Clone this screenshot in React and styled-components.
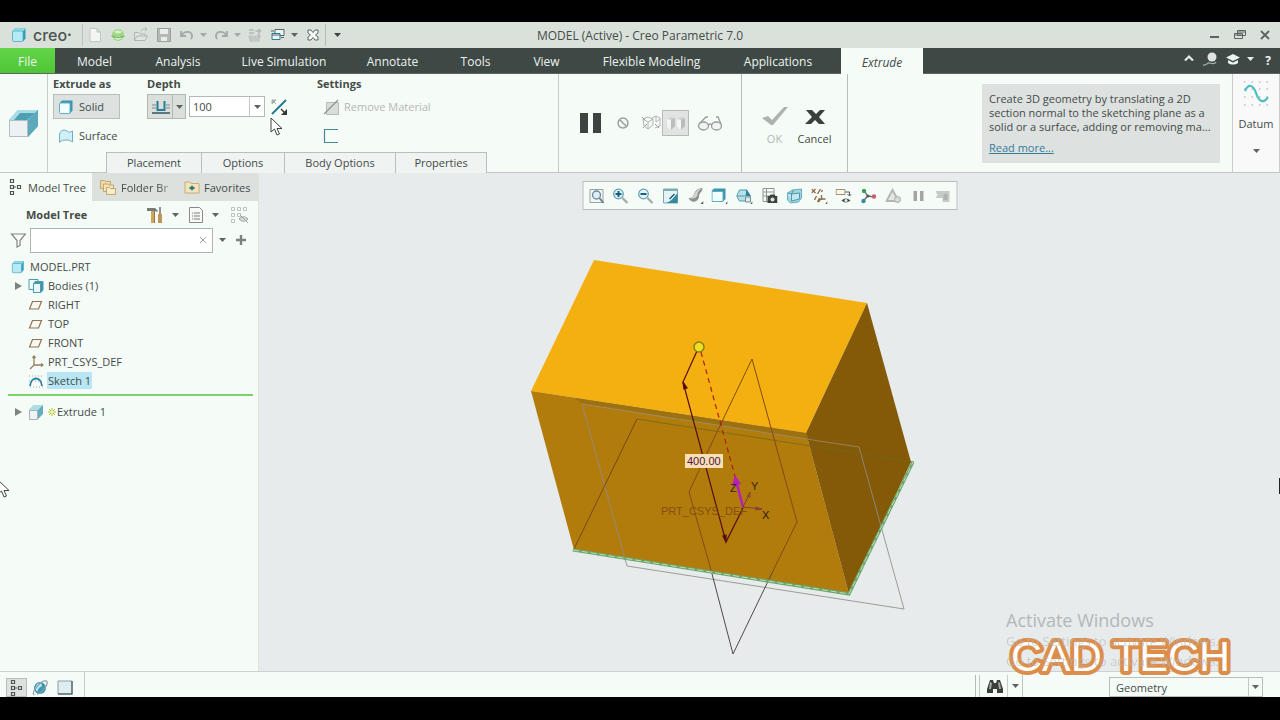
import React, { useState } from 'react';
import styled, { createGlobalStyle } from 'styled-components';

const GlobalStyle = createGlobalStyle`
  * { box-sizing: border-box; }
  body {
    margin: 0;
    background: #000;
    color: #444b49;
    font-family: "Open Sans", "Noto Sans", sans-serif;
    font-size: 11px;
  }
  button, input, select { font: inherit; color: inherit; }
  svg { display: block; flex: none; }
`;

/* ---------- icons ---------- */

const shapes = {
  cube: (
    <>
      <path d="M1.500 4.500 4 1.500h10.500v10l-2.500 3" fill="#2f9db8" />
      <path d="M1.500 4.500 4 1.500h10.500L12 4.500z" fill="#8edcec" />
      <rect x="1.500" y="4" width="10.500" height="10.500" rx="1" fill="#b4eaf4" stroke="#4fa9bf" strokeWidth=".8" />
    </>
  ),
  solid: (
    <>
      <path d="M1.500 4 4 1.500h10.500v10l-2.500 3z" fill="#3b97ae" />
      <rect x="1.500" y="4" width="10.500" height="10.500" rx="1" fill="#f3fdfe" stroke="#5fb0c4" />
    </>
  ),
  surface: <path d="M1.500 14.500V6C3 1.500 7 1.500 9 3s3.500 1.500 5.500 0v11c-2-1.500-3.500-2-6.500-2s-4.500.5-6.500 2.500z" fill="#d0eff6" stroke="#76aebd" />,
  page: <path d="M3 1.500h7l3.500 3.500v9.500H3zM10 1.500V5h3.500" fill="#f2f5f2" stroke="#c0c6c2" />,
  globe: (
    <>
      <circle cx="8" cy="8" r="6" fill="#9fd882" />
      <path d="M4 4.500c3-1.500 5-1.500 8 0l-2 2H6zM4 11.500c3 1.500 5 1.500 8 0l-2-2H6z" fill="#d9efcc" />
      <path d="M1.500 9q6.500 3 13 0" stroke="#7fb066" strokeWidth="1.200" fill="none" />
    </>
  ),
  open: (
    <path d="M1.500 13.500V5.500h4L7 7h5v2M1.500 13.500 4 9h10.500L12 13.500zM8 4c1-2 3-2.500 6-2m-2-1.500 2 1.500-2 2" fill="#e0e5e1" stroke="#b0b6b2" />
  ),
  save: (
    <>
      <path d="M1.500 1.500h13v13h-13z" fill="#b4b9b6" stroke="#9aa19d" />
      <path d="M4 2h8v5H4zM5 10h6v4H5z" fill="#e9eeea" />
    </>
  ),
  undo: <path d="M2 4v5h5M2.500 8.500C6 3 14 4 13 10l-1 2" fill="none" stroke="#a4aaa7" strokeWidth="1.800" />,
  redo: <path d="M14 4v5H9M13.500 8.500C10 3 2 4 3 10l1 2" fill="none" stroke="#a4aaa7" strokeWidth="1.800" />,
  regen: (
    <g fill="none" stroke="#b3b9b5">
      <path d="M2 3h5M2 6h5M8.500 4h5m-2-2 2 2-2 2M12 6v4" strokeWidth="1.500" />
      <path d="M2 9h4v2H2zM8 9h5v2H8zM3 12h9v2H3z" />
    </g>
  ),
  windows: (
    <g fill="#edf4f2" stroke="#56676a">
      <path d="M5 2.500h9v6H5z" />
      <path d="M2 6.500h8v6H2z" stroke="#2d7f97" />
      <path d="M11 10.500h3M1 4h3M2 8h8" />
    </g>
  ),
  closeX: <path d="M3 3h3l2 2.500L10 3h3v3l-2.500 2 2.500 2v3h-3l-2-2.500L6 13H3v-3l2.500-2L3 6z" fill="#f5f8f5" stroke="#5d6663" />,
  extrude: (
    <>
      <path d="M0 12 9 2h20v16l-10 11" fill="#62b0c3" />
      <path d="M9 2h20L19 12H0z" fill="#a8dce6" />
      <path d="M11 5h15l-8 7H5z" fill="#4d9fb4" />
      <path d="M19 12 29 2v16L19 29z" fill="#5da9bc" />
      <path d="M.5 12.500h18v16H.5z" fill="#eef1f3" stroke="#b4bec2" />
    </>
  ),
  depth: (
    <>
      <path d="M1 6h4M15 6h4M1 9h4M15 9h4" stroke="#7c8986" />
      <path d="M6.500 2v9h7V2" fill="none" stroke="#257f99" strokeWidth="2" />
      <path d="M1 14h18" stroke="#36535c" strokeWidth="1.500" />
    </>
  ),
  flip: (
    <>
      <path d="M1 15 15 1" stroke="#257a92" strokeWidth="2" />
      <path d="M1 1h4L1 5zM3 3l2 2" fill="#a7adaa" stroke="#a7adaa" />
      <path d="M16 10v6h-6z" fill="#333b39" />
      <path d="M10 10l4 4" stroke="#333b39" strokeWidth="1.500" />
    </>
  ),
  removeMat: (
    <>
      <path d="M3.500 3.500h12v12h-12z" fill="#d9dddb" stroke="#b5bab7" />
      <path d="M1 15 15 1" stroke="#8f9592" strokeWidth="1.200" />
    </>
  ),
  openSketch: <path d="M15 1.500H1.500v13H15" fill="none" stroke="#4a8793" strokeWidth="1.200" />,
  pause: <path d="M1 1h8v20H1zM14 1h8v20h-8z" fill="#3c4341" />,
  noEntry: <path d="M8 3a5 5 0 1 0 .01 0zM4.500 4.500l7 7" fill="none" stroke="#9ba09e" strokeWidth="1.500" />,
  wireBoxes: (
    <g fill="none" stroke="#b0b5b3">
      <path d="M1 4l5-2 5 2v6l-5 4-4-3zM1 4l5 3 5-3M6 7v7M10 3l4-2 4 2v8l-5 2M14 1v6l4-3" />
      <path d="M0 2l3 3M17 13l-4-4M1 13l4-4" stroke="#999f9c" />
    </g>
  ),
  solidBoxes: (
    <>
      <path d="M1 4l4-2 4 1v8l-4 4-4-3zM11 4l4-2 4 1v8l-4 4-4-3z" fill="#cfd3d2" />
      <path d="M1 4l4 1v10l-4-3zM11 4l4 1v10l-4-3z" fill="#f4f6f5" />
      <path d="M5 5l4-2v8l-4 4zM15 5l4-2v8l-4 4z" fill="#b9bebd" />
    </>
  ),
  glasses: (
    <g fill="#f0f3f1" stroke="#979d9a" strokeWidth="1.300">
      <ellipse cx="6.500" cy="13" rx="5" ry="4" />
      <ellipse cx="19.500" cy="13" rx="5" ry="4" />
      <path d="M11 12q2-2 4 0M2 11 9 4h2M24 11 21 4h-2" fill="none" />
    </g>
  ),
  check: <path d="M0 12l6-2 4 4L22 1h4L11 19H9z" fill="#aeb2b0" />,
  cross: <path d="M1 1h6l4 4 4-4h5l-6 7 6 7h-6l-4-4-4 4H0l7-7z" fill="#39403e" />,
  datum: (
    <>
      <path d="M1 1h24M1 8h24M1 16h24M1 24h24" stroke="#9ca3a0" strokeDasharray="1.500 6" />
      <path d="M2 10c3-7 8-7 11 2s8 11 12 4" fill="none" stroke="#4cbfc4" strokeWidth="2.200" />
    </>
  ),
  chevUp: <path d="M3 9l5-5 5 5-2 1-3-3-3 3z" fill="#e8edeb" />,
  person: (
    <>
      <circle cx="9" cy="6" r="4.500" fill="#dfe4e2" />
      <path d="M0 14c4 1 4-3 7-2s5 1 6-1" stroke="#aab1ae" fill="none" strokeWidth="1.300" />
    </>
  ),
  gradCap: <path d="M8 3l7 3.500L8 10 1 6.500zM3 9l5 2.500L13 9v3c-3 2-7 2-10 0z" fill="#eef2f0" />,
  minimize: <path d="M3 9h9v2H3z" fill="#5b6461" />,
  restore: <path d="M5.500 3.500h8v5h-8zM5.500 5h8M2.500 6.500h8v5h-8zM2.500 8h8" fill="#dce3de" stroke="#5b6461" />,
  winClose: <path d="M4 4l8 8m0-8-8 8" stroke="#5b6461" strokeWidth="1.800" />,
  treeMark: <path d="M2.500.5h3v3h-3zM2.500 6.500h3v3h-3zM2.500 12.500h3v3h-3zM9.500 6.500h3v3h-3zM6 8h2" fill="none" stroke="#4f5755" strokeWidth="1.200" />,
  folders: (
    <g fill="#ecd9a6" stroke="#bb9a5a" strokeWidth=".8">
      <path d="M.5 1.500h4l1 1h5v7h-10z" />
      <path d="M3.500 5h4l1 1h5v6.500h-10z" fill="#f2e3b9" />
      <path d="M6.500 8.500h3l1 1h5v6h-9z" fill="#f7ecca" />
    </g>
  ),
  favorite: (
    <>
      <path d="M1 3h5l1 1.500h8V14H1z" fill="#f3e5ba" stroke="#bda067" strokeWidth=".8" />
      <path d="M8 6.500l1 1.500 2 1-2 1-1 1.500L7 10 5 9l2-1z" fill="#23707f" stroke="#23707f" strokeWidth=".5" />
    </>
  ),
  tools: (
    <>
      <path d="M0 1h8l3 3-1 1-2-1H0z" fill="#777b78" />
      <path d="M4 4h4v12H4z" fill="#cda565" />
      <path d="M7 4h1v12H7z" fill="#9a7439" />
      <path d="M12 0h2v8h-2z" fill="#90928f" />
      <path d="M11 7h4v9h-4z" fill="#c1955a" />
    </>
  ),
  list: (
    <>
      <path d="M1.500.5h10l3 3v12h-13z" fill="#f8faf8" stroke="#868d8a" />
      <path d="M4 6h1m1 0h6M4 9h1m1 0h6M4 12h1m1 0h6" stroke="#757c79" />
    </>
  ),
  treeHidden: (
    <>
      <path d="M1.500 1.500h3v3h-3zM1.500 7.500h3v3h-3zM1.500 13.500h3v3h-3zM7.500 1.500h3v3h-3zM7.500 7.500h3v3h-3zM13.500 1.500h3v3h-3z" fill="none" stroke="#bcc2bf" />
      <path d="M9 13c3-3 6-3 9 0-3 3-6 3-9 0zM10 9l8 8" fill="#d8dcda" stroke="#9da3a0" />
    </>
  ),
  funnel: <path d="M1.500 2h14l-5.500 6.500v5l-3 1.500V8.500z" fill="#fafcfa" stroke="#7f8683" strokeWidth="1.200" />,
  clear: <path d="M3 3l10 10m0-10-10 10" stroke="#9a9f9d" strokeWidth="1.500" />,
  plus: <path d="M8 3v10M3 8h10" stroke="#7b827f" strokeWidth="2.400" />,
  bodies: (
    <g stroke="#4d9db1">
      <path d="M1 1.500h9v10H1z" fill="#eefafb" />
      <path d="M5.500 6l1.500-2.500h8V12l-2 2.500H5.500z" fill="#3d91a8" />
      <path d="M5.500 5.500h7v9h-7z" fill="#e6f8fa" />
    </g>
  ),
  plane: <path d="M4.500 4.500h9l-3 7.500h-9z" fill="#fbf8ef" stroke="#8d7657" strokeWidth="1.200" />,
  csys: (
    <g fill="none" stroke="#957f5c" strokeWidth="1.300">
      <path d="M6 2v9h9M6 11l-4 4M4.500 4 6 2l1.500 2M13 9.500l2 1.500-2 1.500" />
    </g>
  ),
  sketch: (
    <>
      <path d="M2 13c1-10 11-10 12 0" fill="none" stroke="#2f86a4" strokeWidth="1.800" />
      <path d="M1 3h14M1 8h14M2 14h13" stroke="#98a7a8" strokeDasharray="1 2" />
    </>
  ),
  miniExtrude: (
    <>
      <path d="M1 6l5-5h9v9l-5 5z" fill="#64aec0" />
      <path d="M1 6l5-5h9l-5 5z" fill="#afdde6" />
      <path d="M1.500 6.500h8v9h-8z" fill="#f0f3f4" stroke="#a6b3b7" />
    </>
  ),
  spark: (
    <>
      <path d="M1 1l6 6M7 1 1 7M4 0v8M0 4h8" stroke="#a9c42a" />
      <circle cx="4" cy="4" r="1.500" fill="#f6f9a0" />
    </>
  ),
  refit: (
    <>
      <path d="M1.500 1.500h13v13h-13z" fill="#f3f7f6" stroke="#9aa29f" />
      <circle cx="8" cy="7" r="4" fill="#d9eef5" stroke="#6d8594" strokeWidth="1.300" />
      <path d="M11 10l4 5" stroke="#6d8594" strokeWidth="2" />
    </>
  ),
  zoomIn: (
    <>
      <circle cx="6" cy="6" r="4.800" fill="#e4f5fa" stroke="#5f9eb2" strokeWidth="1.200" />
      <path d="M6 3v6M3 6h6" stroke="#175f7c" strokeWidth="2" />
      <path d="M10 10l5 5" stroke="#a3a9a6" strokeWidth="2.200" />
    </>
  ),
  zoomOut: (
    <>
      <circle cx="6" cy="6" r="4.800" fill="#e4f5fa" stroke="#5f9eb2" strokeWidth="1.200" />
      <path d="M3 6h6" stroke="#175f7c" strokeWidth="2" />
      <path d="M10 10l5 5" stroke="#a3a9a6" strokeWidth="2.200" />
    </>
  ),
  repaint: (
    <>
      <path d="M1 1h14v14H1z" fill="#e3f4f6" stroke="#86a4aa" />
      <path d="M1 1h14v2H1z" fill="#7fadb6" />
      <path d="M15 5v10H3c5-1 8-5 12-10z" fill="#338ba0" />
      <path d="M7 11l5-5" stroke="#1d5463" strokeWidth="1.300" />
    </>
  ),
  spin: (
    <>
      <path d="M1 10c2 4 6 5 9 2 2-2 1-4 2-6s3-3 3-6c-3 0-7 2-8 5s-2 5-6 5z" fill="#8b8f8d" />
      <path d="M1 10c4 1 5-2 6-4s3-5 8-6c-3 2-5 4-5 6s-2 6-9 4z" fill="#d4d7d5" />
      <path d="M13 16h3v-3z" fill="#4a504e" />
    </>
  ),
  display: (
    <>
      <path d="M0 3l2.500-2.500H14V11l-2.500 2.500z" fill="#3d95ab" />
      <path d="M.5 3.500h11v10H.5z" fill="#f4fdfe" stroke="#5badc0" />
      <path d="M14 16h2v-3z" fill="#4a504e" />
    </>
  ),
  saved: (
    <>
      <path d="M0 8l3-6h7l4 6-3 5H3z" fill="#b3e4ed" stroke="#4f98aa" />
      <path d="M10 1l4 7H9z" fill="#2c8399" />
      <path d="M0 8h9M9 9h5v5H9z" fill="#e2e8e8" stroke="#6f8e96" />
      <path d="M14 16h2v-3z" fill="#4a504e" />
    </>
  ),
  viewMgr: (
    <>
      <path d="M1.500.5h11v13h-11zM1.500 4h11M1.500 8h7M5 .5v13" fill="#fafbfa" stroke="#8f9592" />
      <path d="M6 8h2l1-1.500h4L14 8h2v7H6z" fill="#3c4240" />
      <circle cx="11" cy="11.500" r="2" fill="#dfe3e1" />
    </>
  ),
  persp: (
    <>
      <path d="M1 5l5-3 9-1v9l-3 4-8 1-3-3z" fill="#9ed5df" stroke="#6aaebd" />
      <path d="M5 6l8-1v6l-8 2zM1 5l4 1v7M5 6l2-4" fill="#c4e8ee" stroke="#4b97ab" />
    </>
  ),
  datums: (
    <>
      <path d="M0 1l4 4M4 1 0 5M3 12l2-4M6 6l3-5M6 14l2-4M10 4l1-2M9 11h5M10 12V7M9 11l-2 3" stroke="#8c6e4b" strokeWidth="1.400" />
      <path d="M14 16h2v-3z" fill="#4a504e" />
    </>
  ),
  annot: (
    <>
      <path d="M.5 1.500h9v5h-9z" fill="#fbf8ee" stroke="#a0906c" />
      <path d="M10 4h4v4m-2-2 2 2 2-2" fill="none" stroke="#555c5a" />
      <path d="M6 12.500q4-4 9 0-5 4-9 0z" fill="#444b49" />
      <circle cx="10.500" cy="12.500" r="1.500" fill="#e8eceb" />
    </>
  ),
  spinCenter: (
    <>
      <path d="M7 8 4 3M7 8l7 1M7 8l-4 5" stroke="#6a716e" strokeWidth="1.400" />
      <circle cx="3.500" cy="3" r="2.200" fill="#3e9c5c" />
      <circle cx="13.500" cy="8.500" r="2.200" fill="#cf5a6a" />
      <circle cx="3" cy="13" r="2.200" fill="#3b86a0" />
      <circle cx="7.500" cy="8" r="1.500" fill="#515856" />
    </>
  ),
  simulate: (
    <>
      <path d="M7 2l6 11H1z" fill="#e4e7e5" stroke="#b3b8b5" strokeWidth="2" />
      <circle cx="12" cy="11.500" r="3" fill="#d6dad8" stroke="#a5aba8" />
    </>
  ),
  smallPause: <path d="M3 3h3.500v10H3zM9.500 3H13v10H9.500z" fill="#a1a6a3" />,
  resume: (
    <>
      <path d="M1 3h14v11H8v-4H1l2-3z" fill="#c6cac8" />
      <path d="M9 6h4v6H9z" fill="#aeb3b0" />
    </>
  ),
  browser: (
    <>
      <circle cx="8" cy="8" r="6" fill="#3f97b4" />
      <path d="M5 4l4-1 1 3-3 2-2 4-2-4z" fill="#bfe4ec" />
      <path d="M2 15C-1 11 10 0 14 1s-3 12-9 13" fill="none" stroke="#8fa3a9" strokeWidth="1.300" />
    </>
  ),
  sheet: (
    <>
      <path d="M1 1h14v13H1z" fill="#deedf0" stroke="#8fa0a3" />
      <path d="M15 1v13H1" fill="none" stroke="#5c7278" strokeWidth="1.500" />
    </>
  ),
  binoculars: (
    <>
      <path d="M3 2h3l1 3h2l1-3h3l3 9v4h-6v-4H6v4H0v-4z" fill="#3a3f3d" />
      <path d="M3 4l2 1-1 6H2zM11 4l2 1 1 6h-2z" fill="#a7acaa" />
    </>
  ),
};

const Icon = ({ name, w = 16, h = 16, box }) => (
  <svg width={w} height={h} viewBox={box || `0 0 ${w} ${h}`} aria-hidden="true">
    {shapes[name]}
  </svg>
);

const Caret = ({ color = '#5d6462' }) => (
  <svg width="7" height="4" viewBox="0 0 7 4" aria-hidden="true">
    <path d="M0 0h7L3.500 4z" fill={color} />
  </svg>
);

/* ---------- app ---------- */

const menuTabs = [
  ['Model', 79],
  ['Analysis', 88],
  ['Live Simulation', 124],
  ['Annotate', 93],
  ['Tools', 73],
  ['View', 69],
  ['Flexible Modeling', 141],
  ['Applications', 112],
];

const viewTools = [
  ['refit', 'Refit'],
  ['zoomIn', 'Zoom In'],
  ['zoomOut', 'Zoom Out'],
  ['repaint', 'Repaint'],
  ['spin', 'Rendering'],
  ['display', 'Display Style'],
  ['saved', 'Saved Orientations'],
  ['viewMgr', 'View Manager'],
  ['persp', 'Perspective'],
  ['datums', 'Datum Display'],
  ['annot', 'Annotation Display'],
  ['spinCenter', 'Spin Center'],
  ['simulate', 'Simulate'],
  ['smallPause', 'Pause'],
  ['resume', 'Resume'],
];

const treeItems = [
  { icon: 'bodies', label: 'Bodies (1)', arrow: true },
  { icon: 'plane', label: 'RIGHT' },
  { icon: 'plane', label: 'TOP' },
  { icon: 'plane', label: 'FRONT' },
  { icon: 'csys', label: 'PRT_CSYS_DEF' },
  { icon: 'sketch', label: 'Sketch 1' },
];

const TitleBar = () => (
  <TitleRow>
    <QuickBar>
      <Brand>
        <Icon name="cube" />
        <BrandName>creo<sup>•</sup></BrandName>
      </Brand>
      <Tool $w={23} aria-label="New"><Icon name="page" /></Tool>
      <Tool $w={23} aria-label="Select working directory"><Icon name="globe" /></Tool>
      <Tool $w={23} aria-label="Open"><Icon name="open" /></Tool>
      <Tool $w={23} aria-label="Save"><Icon name="save" /></Tool>
      <Tool $w={23} aria-label="Undo"><Icon name="undo" /></Tool>
      <Tool $w={11} aria-label="Undo list"><Caret color="#a4aaa7" /></Tool>
      <Tool $w={23} aria-label="Redo"><Icon name="redo" /></Tool>
      <Tool $w={11} aria-label="Redo list"><Caret color="#a4aaa7" /></Tool>
      <Tool $w={23} aria-label="Regenerate"><Icon name="regen" /></Tool>
      <Tool $w={23} aria-label="Windows"><Icon name="windows" /></Tool>
      <Tool $w={11} aria-label="Window list"><Caret /></Tool>
      <Tool $w={25} aria-label="Close window"><Icon name="closeX" /></Tool>
      <QuickMore aria-label="Customize"><Caret color="#3d4442" /></QuickMore>
    </QuickBar>
    <WindowTitle>MODEL (Active) - Creo Parametric 7.0</WindowTitle>
    <WindowButtons>
      <Tool $w={25} aria-label="Minimize"><Icon name="minimize" /></Tool>
      <Tool $w={25} aria-label="Restore"><Icon name="restore" /></Tool>
      <Tool $w={25} aria-label="Close"><Icon name="winClose" /></Tool>
    </WindowButtons>
  </TitleRow>
);

const MenuBar = () => (
  <MenuRow>
    <FileTab>File</FileTab>
    {menuTabs.map(([label, w]) => (
      <MenuTab key={label} $w={w}>{label}</MenuTab>
    ))}
    <ActiveTab>Extrude</ActiveTab>
    <MenuTools>
      <Tool $w={22} aria-label="Minimize ribbon"><Icon name="chevUp" /></Tool>
      <Tool $w={22} aria-label="Account"><Icon name="person" /></Tool>
      <Tool $w={22} aria-label="Learning"><Icon name="gradCap" /></Tool>
      <Tool $w={12} aria-label="Learning list"><Caret color="#e8edeb" /></Tool>
      <HelpButton aria-label="Help">?</HelpButton>
    </MenuTools>
  </MenuRow>
);

const Ribbon = () => {
  const [depth, setDepth] = useState('100');

  return (
    <RibbonRow>
      <FeatureCell><Icon name="extrude" w={30} h={30} /></FeatureCell>

      <OptionsCell>
        <Groups>
          <Group $w={94}>
            <GroupLabel>Extrude as</GroupLabel>
            <KindButton $on><Icon name="solid" />Solid</KindButton>
            <KindButton><Icon name="surface" />Surface</KindButton>
          </Group>
          <Group $w={170}>
            <GroupLabel as="label" htmlFor="depth">Depth</GroupLabel>
            <DepthRow>
              <SplitButton aria-label="Depth type">
                <Icon name="depth" w={20} h={16} />
                <SplitCaret><Caret /></SplitCaret>
              </SplitButton>
              <DepthBox>
                <input id="depth" value={depth} onChange={(e) => setDepth(e.target.value)} />
                <DepthDrop aria-label="Recent depths"><Caret /></DepthDrop>
              </DepthBox>
              <Tool $w={28} aria-label="Flip direction"><Icon name="flip" /></Tool>
            </DepthRow>
          </Group>
          <Group $w={130}>
            <GroupLabel>Settings</GroupLabel>
            <SettingButton disabled><Icon name="removeMat" w={17} h={16} />Remove Material</SettingButton>
            <SettingButton aria-label="Thicken sketch"><Icon name="openSketch" w={17} h={16} /></SettingButton>
          </Group>
        </Groups>
        <PanelTabs>
          <PanelTab $w={95}>Placement</PanelTab>
          <PanelTab $w={83}>Options</PanelTab>
          <PanelTab $w={111}>Body Options</PanelTab>
          <PanelTab $w={92}>Properties</PanelTab>
        </PanelTabs>
      </OptionsCell>

      <PreviewCell>
        <Tool $w={30} aria-label="Pause"><Icon name="pause" w={23} h={22} /></Tool>
        <Tool $w={36} aria-label="No preview"><Icon name="noEntry" /></Tool>
        <Tool $w={21} aria-label="Unattached"><Icon name="wireBoxes" w={19} h={16} /></Tool>
        <PressedTool aria-label="Attached"><Icon name="solidBoxes" w={20} h={17} /></PressedTool>
        <Tool $w={42} aria-label="Verify"><Icon name="glasses" w={26} h={20} /></Tool>
      </PreviewCell>

      <ConfirmCell>
        <ConfirmButton disabled><Icon name="check" w={26} h={20} />OK</ConfirmButton>
        <ConfirmButton><Icon name="cross" w={20} h={20} box="0 -3 20 20" />Cancel</ConfirmButton>
      </ConfirmCell>

      <HelpCell>
        <HelpCard>
          <p>Create 3D geometry by translating a 2D<br />section normal to the sketching plane as a<br />solid or a surface, adding or removing ma...</p>
          <a href="#help">Read more...</a>
        </HelpCard>
      </HelpCell>

      <DatumButton>
        <Icon name="datum" w={26} h={26} />
        <span>Datum</span>
        <Caret />
      </DatumButton>
    </RibbonRow>
  );
};

const Sidebar = () => (
  <Side>
    <SideTabs>
      <SideTab $w={92} $on><Icon name="treeMark" />Model Tree</SideTab>
      <SideTab $w={84}><Icon name="folders" w={17} h={16} /><Fade>Folder Br</Fade></SideTab>
      <SideTab $w={80}><Icon name="favorite" />Favorites</SideTab>
    </SideTabs>
    <SideHead>
      <strong>Model Tree</strong>
      <Tool $w={24} aria-label="Settings"><Icon name="tools" /></Tool>
      <Tool $w={17} aria-label="Settings list"><Caret /></Tool>
      <Tool $w={24} aria-label="Show"><Icon name="list" /></Tool>
      <Tool $w={14} aria-label="Show list"><Caret /></Tool>
      <Tool $w={34} aria-label="Hide tree"><Icon name="treeHidden" w={18} h={18} /></Tool>
    </SideHead>
    <SearchRow>
      <Icon name="funnel" />
      <SearchBox>
        <input aria-label="Filter tree" />
        <Tool $w={18} aria-label="Clear"><Icon name="clear" w={10} h={10} box="0 0 16 16" /></Tool>
      </SearchBox>
      <Tool $w={18} aria-label="Search options"><Caret /></Tool>
      <Tool $w={20} aria-label="Add"><Icon name="plus" /></Tool>
    </SearchRow>
    <Tree>
      <RootItem><Icon name="cube" w={14} h={14} box="0 0 16 16" />MODEL.PRT</RootItem>
      {treeItems.map((item) => (
        <TreeItem key={item.label}>
          <Arrow>{item.arrow && <ArrowIcon />}</Arrow>
          <Icon name={item.icon} />
          <ItemLabel $on={item.label === 'Sketch 1'}>{item.label}</ItemLabel>
        </TreeItem>
      ))}
      <InsertLine />
      <TreeItem>
        <Arrow><ArrowIcon /></Arrow>
        <Icon name="miniExtrude" />
        <NewMark><Icon name="spark" w={8} h={8} /></NewMark>
        Extrude 1
      </TreeItem>
    </Tree>
  </Side>
);

const ArrowIcon = () => (
  <svg width="7" height="8" viewBox="0 0 7 8"><path d="M0 0l7 4-7 4z" fill="#7d8481" /></svg>
);

const Model = () => (
  <Scene viewBox="259 173 1021 498" role="img" aria-label="Extruded block preview">
    <polygon points="594,260 867,303 806,433 531,391" fill="#f4b010" />
    <polygon points="531,391 806,433 849,594 574,550" fill="#b17c0b" />
    <polygon points="867,303 911,462 849,594 806,433" fill="#845a08" />
    <polygon points="575,398 806,433 809,440 582,404" fill="#9e7110" />
    <g fill="none" strokeWidth="1">
      <path d="M806 439 859 447" stroke="#93815d" />
      <path d="M582 404 806 439" stroke="#a08e62" />
      <path d="M859 447 904 609 627 566 582 404" stroke="#8f8e88" strokeOpacity=".85" />
      <path d="M573 551 637 419" stroke="#7a4718" />
      <path d="M637 419 914 462" stroke="#6f6a1c" strokeOpacity=".8" />
      <path d="M716 434 752 359 797 522 772 573M716 434 689 492 711 570" stroke="#87491a" />
      <path d="M711 570 733 654 772 573" stroke="#4d4a4b" />
      <path d="M573 550 849 594 913 462" stroke="#6da46c" strokeWidth="3" />
      <path d="M573 550 849 594 913 462" stroke="#b8e0b5" strokeDasharray="6 3" />
    </g>
    <g fill="none" stroke="#560c12" strokeWidth="1.200">
      <path d="M697 351 683 382 726 542 743 508" />
      <path d="M683 382l4 6-3 1zM726 542l0-7-3 1z" fill="#560c12" />
      <path d="M701 352 736 480" stroke="#b01d16" strokeDasharray="5 4" />
    </g>
    <circle cx="699" cy="347" r="5" fill="#f1de20" stroke="#85801a" strokeWidth="1.500" />
    <path d="M743 507 737 484" stroke="#b51fc0" strokeWidth="2.500" />
    <path d="M732 486 735 475 741 484z" fill="#b51fc0" />
    <path d="M743 507 749 495M743 507 761 509M747 497l3-5v6M755 507l7 2-7 1" stroke="#8a3d31" fill="none" />
    <SceneText x="661" y="515" fill="#85500f">PRT_CSYS_DEF</SceneText>
    <rect x="685" y="454" width="38" height="14" fill="#f8dfb5" />
    <SceneText x="687" y="465" fill="#4f1642">400.00</SceneText>
    <SceneText x="730" y="492" fill="#3b210c">Z</SceneText>
    <SceneText x="751" y="490" fill="#3b210c">Y</SceneText>
    <SceneText x="762" y="519" fill="#2a1a10">X</SceneText>
  </Scene>
);

const StatusBar = () => (
  <StatusRow>
    <StatusTools>
      <PressedSmall aria-label="Model tree"><Icon name="treeMark" /></PressedSmall>
      <Tool $w={26} aria-label="Browser"><Icon name="browser" /></Tool>
      <Tool $w={24} aria-label="Full screen"><Icon name="sheet" /></Tool>
    </StatusTools>
    <StatusFind>
      <FindGroup>
        <Tool $w={24} aria-label="Find"><Icon name="binoculars" /></Tool>
        <FindCaret aria-label="Find list"><Caret /></FindCaret>
      </FindGroup>
    </StatusFind>
    <FilterBox>
      <select aria-label="Selection filter" defaultValue="Geometry">
        <option>Geometry</option>
      </select>
      <FilterCaret><Caret /></FilterCaret>
    </FilterBox>
  </StatusRow>
);

const Pointer = () => (
  <svg width="13" height="19" viewBox="0 0 13 19">
    <path d="M1 1v14l3.500-3 2.500 6 2.500-1-2.500-5.500H12z" fill="#fff" stroke="#3f4442" />
  </svg>
);

const App = () => (
  <Screen>
    <GlobalStyle />
    <TitleBar />
    <MenuBar />
    <Ribbon />
    <Body>
      <Sidebar />
      <Viewport>
        <Model />
        <ViewToolbar>
          {viewTools.map(([icon, label]) => (
            <Tool key={icon} $w={24} aria-label={label}><Icon name={icon} /></Tool>
          ))}
        </ViewToolbar>
        <Watermark>
          <h2>Activate Windows</h2>
          <p>Go to Settings to activate Windows.</p>
          <p>Go to Settings to activate Windows.</p>
        </Watermark>
        <Channel width="232" height="48" viewBox="0 0 232 48">
          <text x="7" y="40">CAD TECH</text>
        </Channel>
      </Viewport>
    </Body>
    <StatusBar />
    <Cursor $x={270} $y={117}><Pointer /></Cursor>
    <Cursor $x={-3} $y={479}><Pointer /></Cursor>
    <EdgeCursor />
  </Screen>
);

/* ---------- styles ---------- */

const Screen = styled.div`
  position: relative;
  display: flex;
  flex-direction: column;
  min-height: 100vh;
  padding: 22px 0 23px;
  background: #000;
  overflow: hidden;
`;

const Tool = styled.button`
  display: flex;
  align-items: center;
  justify-content: center;
  flex: none;
  width: ${(p) => p.$w}px;
  height: 100%;
  padding: 0;
  border: 0;
  background: none;
`;

const TitleRow = styled.header`
  display: grid;
  grid-template-columns: 1fr auto 1fr;
  align-items: center;
  height: 26px;
  background: #dae1db;
`;

const QuickBar = styled.div`
  display: flex;
  align-items: center;
  height: 26px;
`;

const Brand = styled.div`
  display: flex;
  align-items: center;
  gap: 6px;
  width: 83px;
  height: 22px;
  padding-left: 11px;
  border-right: 1px solid #bcc3be;
`;

const BrandName = styled.span`
  color: #4c5452;
  font-family: Inter, sans-serif;
  font-size: 16px;
  font-weight: 500;
  line-height: 20px;

  sup {
    font-size: 8px;
    line-height: 0;
    vertical-align: 4px;
  }
`;

const QuickMore = styled(Tool)`
  width: 23px;
  height: 22px;
  border-left: 1px solid #b4bbb6;
`;

const WindowTitle = styled.div`
  font-size: 12px;
`;

const WindowButtons = styled.div`
  display: flex;
  justify-content: flex-end;
  height: 26px;
  padding-right: 3px;
`;

const MenuRow = styled.nav`
  display: flex;
  height: 26px;
  background: #3e4845;
  border-bottom: 1px solid #5d6663;
`;

const MenuTab = styled.button`
  flex: none;
  width: ${(p) => p.$w}px;
  padding: 2px 0 0;
  border: 0;
  background: none;
  color: #eef2f0;
  font-size: 12px;
  white-space: nowrap;
`;

const FileTab = styled(MenuTab)`
  width: 55px;
  background: linear-gradient(#62d548, #4fc637);
`;

const ActiveTab = styled(MenuTab)`
  width: 82px;
  height: 26px;
  margin-left: 7px;
  background: #f5fbf6;
  color: #444b49;
  font-style: italic;
`;

const MenuTools = styled.div`
  display: flex;
  height: 22px;
  margin-left: auto;
`;

const HelpButton = styled(MenuTab)`
  width: 24px;
  font-weight: 700;
`;

const RibbonRow = styled.section`
  display: flex;
  height: 99px;
  background: #f5fbf6;
  border-bottom: 1px solid #c4c9c7;
`;

const FeatureCell = styled.div`
  display: flex;
  align-items: center;
  padding-left: 9px;
  width: 48px;
  border-right: 1px solid #c8cdca;
`;

const OptionsCell = styled.div`
  display: flex;
  flex-direction: column;
  justify-content: space-between;
  width: 511px;
  border-right: 1px solid #c8cdca;
`;

const Groups = styled.div`
  display: flex;
  padding-left: 5px;
`;

const Group = styled.div`
  width: ${(p) => p.$w}px;
`;

const GroupLabel = styled.div`
  display: block;
  height: 20px;
  font-weight: 700;
  line-height: 20px;
`;

const KindButton = styled.button`
  display: flex;
  align-items: center;
  gap: 5px;
  height: 25px;
  width: 67px;
  margin-bottom: 4px;
  padding: 0 4px;
  border: 1px solid ${(p) => (p.$on ? '#b9bebc' : 'transparent')};
  background: ${(p) => (p.$on ? '#dde1df' : 'none')};
`;

const DepthRow = styled.div`
  display: flex;
  align-items: center;
  height: 25px;
`;

const SplitButton = styled.button`
  display: flex;
  align-items: center;
  justify-content: space-between;
  width: 39px;
  height: 25px;
  padding: 0 0 0 3px;
  border: 1px solid #b1b7b4;
  background: #dadfdc;
`;

const SplitCaret = styled.span`
  display: flex;
  align-items: center;
  justify-content: center;
  width: 13px;
  height: 23px;
  border-left: 1px solid #b1b7b4;
`;

const DepthBox = styled.div`
  display: flex;
  width: 76px;
  height: 21px;
  margin-left: 3px;
  border: 1px solid #b3b9b6;
  background: #fff;

  input {
    flex: 1;
    min-width: 0;
    padding: 0 3px;
    border: 0;
    background: none;
    outline: 0;
  }
`;

const DepthDrop = styled(Tool)`
  width: 15px;
  border-left: 1px solid #c3c8c5;
`;

const SettingButton = styled.button`
  display: flex;
  align-items: center;
  gap: 4px;
  height: 25px;
  margin-bottom: 4px;
  padding: 0 0 0 6px;
  border: 0;
  background: none;
  white-space: nowrap;

  &:disabled { color: #b3b8b5; }
`;

const PanelTabs = styled.div`
  display: flex;
  padding-left: 58px;
`;

const PanelTab = styled.button`
  width: ${(p) => p.$w}px;
  height: 21px;
  padding: 0 0 2px;
  border: 1px solid #b9bfbc;
  border-width: 1px 0 0 1px;
  background: #eff3f1;

  &:last-child { border-right-width: 1px; }
`;

const PreviewCell = styled.div`
  display: flex;
  align-items: center;
  width: 183px;
  padding-left: 16px;
  border-right: 1px solid #b9bebb;
`;

const PressedTool = styled(Tool)`
  width: 27px;
  height: 26px;
  border: 1px solid #b5bab8;
  background: #dfe3e1;
`;

const ConfirmCell = styled.div`
  display: flex;
  align-items: center;
  justify-content: center;
  width: 106px;
  padding-top: 6px;
  border-right: 1px solid #b9bebb;
`;

const ConfirmButton = styled.button`
  display: flex;
  flex-direction: column;
  align-items: center;
  gap: 5px;
  width: 40px;
  padding: 0;
  border: 0;
  background: none;

  &:disabled { color: #b3b8b5; }
`;

const HelpCell = styled.div`
  display: flex;
  flex: 1;
  align-items: center;
  justify-content: flex-end;
  padding-right: 12px;
`;

const HelpCard = styled.aside`
  width: 238px;
  height: 79px;
  padding: 8px 7px;
  background: #dde1df;
  line-height: 14px;
  white-space: nowrap;

  p { margin: 0 0 7px; }
  a { color: #3a7c9c; }
`;

const DatumButton = styled.button`
  display: flex;
  flex-direction: column;
  align-items: center;
  gap: 9px;
  width: 48px;
  padding: 7px 0 0;
  border: 1px solid #c8cdca;
  border-width: 0 1px;
  background: #f8f9f8;

  span {
    height: 18px;
    margin-bottom: 6px;
  }
`;

const Body = styled.main`
  display: flex;
  flex: 1;
  background: #e7ebeb;
`;

const Side = styled.aside`
  width: 259px;
  flex: none;
  background: #f5fbf6;
  border-right: 1px solid #dfe3e2;
`;

const SideTabs = styled.div`
  display: flex;
  height: 28px;
  background: #dce1de;
`;

const SideTab = styled.button`
  display: flex;
  align-items: center;
  gap: 4px;
  width: ${(p) => p.$w}px;
  padding: 0 0 0 8px;
  border: 0;
  background: ${(p) => (p.$on ? '#f5fbf6' : 'none')};
  white-space: nowrap;
`;

const Fade = styled.span`
  mask-image: linear-gradient(90deg, #000 80%, transparent 120%);
`;

const SideHead = styled.div`
  display: flex;
  align-items: center;
  height: 27px;
  padding-left: 26px;

  strong {
    width: 117px;
  }
`;

const SearchRow = styled.div`
  display: flex;
  align-items: center;
  height: 24px;
  padding-left: 10px;
`;

const SearchBox = styled.div`
  display: flex;
  width: 183px;
  height: 25px;
  margin-left: 4px;
  border: 1px solid #aeb4b1;
  background: #fff;

  input {
    flex: 1;
    min-width: 0;
    border: 0;
    background: none;
    outline: 0;
  }
`;

const Tree = styled.ul`
  margin: 0;
  padding: 5px 0 0;
  list-style: none;
`;

const TreeItem = styled.li`
  display: flex;
  align-items: center;
  height: 19px;
  padding-left: 15px;
`;

const RootItem = styled(TreeItem)`
  gap: 5px;
  padding-left: 11px;
`;

const Arrow = styled.span`
  width: 13px;
`;

const ItemLabel = styled.span`
  margin-left: 3px;
  padding: 0 1px;
  line-height: 17px;
  background: ${(p) => (p.$on ? '#b9e6f5' : 'none')};
`;

const InsertLine = styled.li`
  height: 2px;
  margin: 4px 5px 6px 8px;
  background: #79d36b;
`;

const NewMark = styled.span`
  margin: 0 1px 0 4px;
`;

const Viewport = styled.section`
  position: relative;
  display: flex;
  flex: 1;
  min-width: 0;
`;

const Scene = styled.svg`
  width: 100%;
  height: auto;
  flex: 1;
  min-width: 0;
`;

const SceneText = styled.text`
  font-family: "Liberation Sans", sans-serif;
  font-size: 11px;
`;

const ViewToolbar = styled.div`
  position: absolute;
  top: 8px;
  left: 50%;
  transform: translateX(-50%);
  display: flex;
  justify-content: space-between;
  width: 375px;
  height: 29px;
  padding: 0 1px;
  border: 1px solid #b8bebb;
  background: #f5fbf6;
`;

const Watermark = styled.div`
  position: absolute;
  z-index: 2;
  right: 54px;
  bottom: 0;
  width: 220px;
  color: #b2b8b9;
  white-space: nowrap;
  pointer-events: none;

  h2 {
    margin: 0;
    font-size: 18px;
    font-weight: 400;
    line-height: 22px;
  }

  p {
    margin: 0;
    font-size: 13px;
    line-height: 20px;
    opacity: 0.6;
  }
`;

const Channel = styled.svg`
  position: absolute;
  z-index: 1;
  right: 44px;
  bottom: -8px;

  text {
    fill: #fff;
    stroke: #dd8d4a;
    stroke-width: 8px;
    stroke-linejoin: round;
    paint-order: stroke;
    font-family: "Liberation Sans", sans-serif;
    font-size: 43px;
  }
`;

const StatusRow = styled.footer`
  display: flex;
  height: 26px;
  background: #f5fbf6;
  border-top: 1px solid #cdd1d0;
`;

const StatusTools = styled.div`
  display: flex;
  align-items: flex-end;
  width: 85px;
  height: 25px;
  padding: 6px 0 0 6px;
  border-right: 1px solid #c3c8c5;
`;

const PressedSmall = styled(Tool)`
  width: 21px;
  border: 1px solid #b9bebb;
  background: #dce0de;
`;

const StatusFind = styled.div`
  height: 22px;
  margin: 3px 86px 0 auto;
  padding-left: 3px;
  border-left: 1px solid #b5bab8;
`;

const FindGroup = styled.div`
  display: flex;
  height: 22px;
  padding-left: 3px;
  border: 1px solid #c1c6c3;
  border-width: 0 1px;
`;

const FindCaret = styled(Tool)`
  width: 15px;
  border-left: 1px solid #c8cdca;
`;

const FilterBox = styled.div`
  display: flex;
  width: 154px;
  height: 20px;
  margin: 5px 17px 0 0;
  border: 1px solid #b9bebb;

  select {
    flex: 1;
    padding: 0 6px;
    border: 0;
    background: none;
    appearance: none;
    outline: 0;
  }
`;

const FilterCaret = styled.span`
  display: flex;
  align-items: center;
  justify-content: center;
  width: 14px;
  border-left: 1px solid #c3c8c5;
`;

const Cursor = styled.div`
  position: absolute;
  z-index: 3;
  left: ${(p) => p.$x}px;
  top: ${(p) => p.$y}px;
  pointer-events: none;
`;

const EdgeCursor = styled.div`
  position: absolute;
  right: 0;
  top: 478px;
  width: 1px;
  height: 16px;
  background: #222;
`;

export default App;
